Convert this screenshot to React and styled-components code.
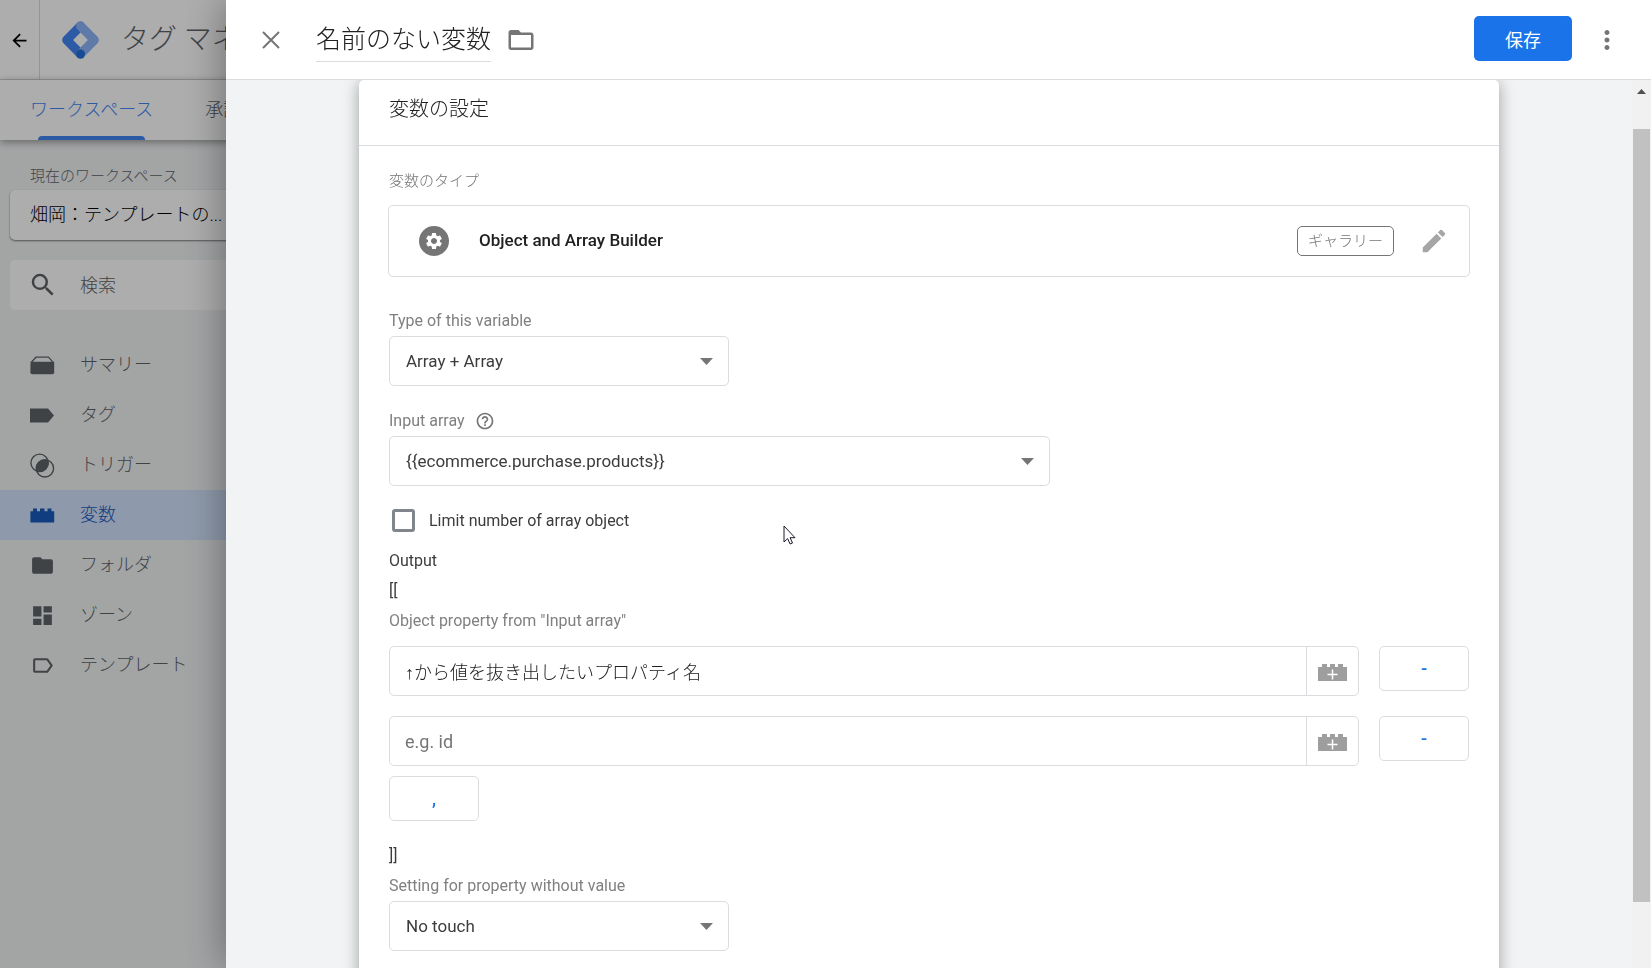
import React, { useState } from "react";
import styled, { createGlobalStyle } from "styled-components";
import {
  MdArrowBack,
  MdDashboard,
  MdEdit,
  MdFolder,
  MdFolderOpen,
  MdHelpOutline,
  MdLabelOutline,
  MdMoreVert,
  MdSearch,
  MdSettings,
} from "react-icons/md";

const GlobalStyle = createGlobalStyle`
  * {
    box-sizing: border-box;
  }

  html, body, #root {
    height: 100%;
  }

  body {
    margin: 0;
    overflow: hidden;
    background: #f1f3f4;
    color: #212121;
    font-family: Roboto, "Liberation Sans", "Noto Sans CJK JP", sans-serif;
    font-size: 16px;
  }

  button, input, select {
    font-family: inherit;
    margin: 0;
  }

  svg {
    display: block;
    flex-shrink: 0;
  }
`;

/* ---------- page behind the sheet ---------- */

const Page = styled.div`
  height: 100vh;
  display: flex;
  flex-direction: column;
  font-weight: 300;
`;

const AppHeader = styled.header`
  display: flex;
  height: 80px;
  background: #fff;
  border-bottom: 1px solid #dadce0;
`;

const BackButton = styled.button`
  display: flex;
  align-items: center;
  justify-content: center;
  width: 40px;
  padding: 2px 0 0;
  border: none;
  border-right: 1px solid #dadce0;
  background: none;
  color: #000;
`;

const Brand = styled.div`
  display: flex;
  align-items: center;
  gap: 22px;
  padding-left: 22px;
  color: #5f6368;
  font-size: 28px;
  line-height: 40px;
  white-space: nowrap;
`;

const Tabs = styled.nav`
  display: flex;
  gap: 52px;
  height: 60px;
  padding-left: 30px;
  background: #fff;
  box-shadow: 0 2px 8px rgba(0, 0, 0, 0.4);
  z-index: 1;
`;

const Tab = styled.a`
  display: flex;
  flex-direction: column;
  align-items: center;
  justify-content: space-between;
  padding-top: 17px;
  color: ${({ $active }) => ($active ? "#4285f4" : "#5f6368")};
  font-size: 18px;
  line-height: 26px;
  text-decoration: none;
  white-space: nowrap;

  &::after {
    content: "";
    width: calc(100% - 16px);
    height: 4px;
    border-radius: 4px 4px 0 0;
    background: ${({ $active }) => ($active ? "#4285f4" : "transparent")};
  }
`;

const Sidebar = styled.aside`
  width: 320px;
  padding-top: 25px;
`;

const WorkspaceLabel = styled.div`
  padding-left: 30px;
  color: #5f6368;
  font-size: 15px;
  line-height: 22px;
`;

const WorkspaceButton = styled.button`
  display: block;
  width: 290px;
  height: 50px;
  margin: 3px 0 20px 10px;
  padding: 0 20px 4px;
  border: none;
  border-radius: 5px;
  background: #fff;
  box-shadow: 0 1px 2px rgba(0, 0, 0, 0.5);
  color: #000;
  font-size: 18px;
  font-weight: 300;
  text-align: left;
`;

const SearchBox = styled.label`
  display: flex;
  align-items: center;
  gap: 22px;
  width: 290px;
  height: 50px;
  margin: 0 0 30px 10px;
  padding-left: 18px;
  border-radius: 5px;
  background: #fff;
  color: #5f6368;
`;

const SearchInput = styled.input`
  flex: 1;
  min-width: 0;
  padding: 0;
  border: none;
  outline: none;
  background: none;
  font-size: 18px;
  font-weight: 300;

  &::placeholder {
    color: #5f6368;
  }
`;

const NavItem = styled.a`
  display: flex;
  align-items: center;
  gap: 25px;
  height: 50px;
  padding-left: 30px;
  background: ${({ $active }) => ($active ? "#d2e3fc" : "transparent")};
  color: ${({ $active }) => ($active ? "#185abc" : "#5f6368")};
  font-size: 18px;
  line-height: 26px;
  text-decoration: none;
`;

const Scrim = styled.div`
  position: fixed;
  inset: 0;
  z-index: 2;
  background: rgba(0, 0, 0, 0.32);
`;

/* ---------- sheet ---------- */

const Sheet = styled.section`
  position: fixed;
  inset: 0 0 0 226px;
  z-index: 3;
  display: flex;
  flex-direction: column;
  background: #f1f3f4;
  box-shadow: 0 0 40px rgba(0, 0, 0, 0.4);
`;

const SheetHeader = styled.header`
  display: flex;
  align-items: center;
  flex-shrink: 0;
  height: 80px;
  padding: 0 29px 0 30px;
  background: #fff;
  border-bottom: 1px solid #dadce0;
  color: #757575;
  z-index: 1;
`;

const IconButton = styled.button`
  display: flex;
  align-items: center;
  justify-content: center;
  padding: 0;
  border: none;
  background: none;
  color: inherit;
  cursor: pointer;
`;

const NameInput = styled.input`
  width: 175px;
  height: 44px;
  margin: 0 15px 0 30px;
  padding: 0 0 4px;
  border: none;
  border-bottom: 1px solid #dadce0;
  outline: none;
  color: #212121;
  font-size: 25px;
  font-weight: 300;
`;

const SaveButton = styled.button`
  width: 98px;
  height: 45px;
  margin: 0 20px 2px auto;
  border: none;
  border-radius: 5px;
  background: #1a73e8;
  color: #fff;
  font-size: 18px;
  cursor: pointer;
`;

const SheetBody = styled.div`
  display: flex;
  flex: 1;
  min-height: 0;
`;

const ScrollArea = styled.div`
  flex: 1;
  min-width: 0;
  padding: 0 133px;
  overflow: hidden;
`;

const Card = styled.div`
  min-height: 100%;
  padding-bottom: 40px;
  border-radius: 5px;
  background: #fff;
  box-shadow: 0 2px 16px rgba(0, 0, 0, 0.35);
`;

const CardTitle = styled.h2`
  margin: 0;
  padding: 15px 30px 22px;
  border-bottom: 1px solid #dadce0;
  font-size: 20px;
  font-weight: 300;
  line-height: 28px;
`;

const CardBody = styled.div`
  display: flex;
  flex-direction: column;
  align-items: flex-start;
  padding: 25px 30px;
`;

const Caption = styled.div`
  color: #757575;
  font-size: 15px;
  font-weight: 300;
  line-height: 20px;
`;

const TypeBox = styled.div`
  display: flex;
  align-items: center;
  align-self: stretch;
  height: 72px;
  margin: 14px -1px 34px;
  padding: 0 20px 0 30px;
  border: 1px solid #dadce0;
  border-radius: 5px;
  color: #a6a6a6;
`;

const TypeIcon = styled.span`
  display: flex;
  align-items: center;
  justify-content: center;
  width: 30px;
  height: 30px;
  margin-right: 30px;
  border-radius: 50%;
  background: #757575;
  color: #fff;
`;

const TypeName = styled.span`
  flex: 1;
  padding-bottom: 2px;
  color: #212121;
  font-size: 17px;
  font-weight: 500;
  line-height: 24px;
`;

const Badge = styled.span`
  height: 30px;
  margin-right: 25px;
  padding: 0 10px;
  border: 1px solid #757575;
  border-radius: 5px;
  color: #757575;
  font-size: 15px;
  font-weight: 300;
  line-height: 28px;
`;

const Label = styled.label`
  display: flex;
  align-items: center;
  gap: 10px;
  height: 20px;
  margin-bottom: 5px;
  color: #808080;
  font-size: 16px;
  line-height: 20px;
`;

const GroupLabel = styled(Label)`
  margin: 5px 0 15px;
`;

const SelectWrap = styled.div`
  position: relative;
  width: ${({ $wide }) => ($wide ? "661px" : "340px")};
  max-width: 100%;
  margin-bottom: 25px;

  svg {
    position: absolute;
    top: 22px;
    right: 16px;
    pointer-events: none;
  }
`;

const Select = styled.select`
  appearance: none;
  display: block;
  width: 100%;
  height: 50px;
  padding: 0 40px 0 16px;
  border: 1px solid #dadce0;
  border-radius: 5px;
  background: #fff;
  color: #3c3c3c;
  font-size: 17px;
`;

const CheckRow = styled.label`
  display: flex;
  align-items: center;
  gap: 14px;
  height: 24px;
  margin: -3px 0 14px;
  padding-left: 3px;
  color: #3c3c3c;
  font-size: 16px;
`;

const Checkbox = styled.input`
  appearance: none;
  width: 23px;
  height: 23px;
  border: 3px solid #80868b;
  border-radius: 3px;

  &:checked {
    background: #1a73e8;
  }
`;

const Line = styled.div`
  height: 30px;
  color: #3c3c3c;
  font-size: 16px;
  line-height: 30px;
`;

const PropertyRow = styled.div`
  display: flex;
  align-self: stretch;
  gap: 20px;
  margin-bottom: ${({ $last }) => ($last ? "10px" : "20px")};
`;

const PropertyField = styled.div`
  display: flex;
  flex: 1;
  min-width: 0;
  height: 50px;
  border: 1px solid #dadce0;
  border-radius: 5px;
`;

const PropertyInput = styled.input`
  flex: 1;
  min-width: 0;
  padding: 0 15px;
  border: none;
  outline: none;
  background: none;
  color: #212121;
  font-size: 18px;
  font-weight: 300;

  &::placeholder {
    color: #757575;
    font-weight: 400;
  }
`;

const BrickButton = styled(IconButton)`
  width: 52px;
  padding-top: 3px;
  border-left: 1px solid #dadce0;
  color: #9e9e9e;
`;

const SmallButton = styled.button`
  width: 90px;
  height: 45px;
  border: 1px solid #dadce0;
  border-radius: 5px;
  background: #fff;
  color: #1a73e8;
  font-size: 18px;
  font-weight: 500;
  cursor: pointer;
`;

const ClosingLine = styled(Line)`
  margin: 20px 0 5px;
`;

const Scrollbar = styled.div`
  display: flex;
  flex-direction: column;
  width: 19px;
  padding: 9px 1px 0;
  background: #f1f1f1;

  svg {
    align-self: center;
    margin-bottom: 8px;
  }
`;

const Track = styled.div`
  display: grid;
  grid-template-rows: 27fr 773fr 66fr;
  flex: 1;
`;

const Thumb = styled.div`
  grid-row: 2;
  background: #c1c1c1;
`;

// Mouse pointer lying over the form
const Pointer = styled.svg`
  position: fixed;
  left: 783px;
  top: 525px;
  z-index: 4;
  pointer-events: none;
`;

/* ---------- drawings ---------- */

const Logo = () => (
  <svg width="37" height="40" viewBox="0 0 37 40">
    <g fill="none" strokeWidth="9" strokeLinecap="round" strokeLinejoin="round">
      <path d="M18.5 6 4.7 20l13.800 14" stroke="#4285f4" />
      <path d="M18.5 6l13.800 14-13.800 14" stroke="#8ab4f8" />
    </g>
    <circle cx="18.5" cy="34" r="4.500" fill="#246fdb" />
  </svg>
);

const CloseIcon = () => (
  <svg width="30" height="30" viewBox="0 0 30 30" stroke="currentColor" strokeWidth="2">
    <path d="M7 7l16 16M23 7L7 23" />
  </svg>
);

const SummaryIcon = () => (
  <svg width="25" height="25" viewBox="0 0 25 25" fill="currentColor">
    <path d="M5.6 3.5h13.2L23.6 9H22l-3.8-4.3H6.4L2.6 9H.8z" />
    <path d="M.5 8.8h23.7v10.6a1.8 1.8 0 0 1-1.8 1.8H2.2a1.8 1.8 0 0 1-1.8-1.8z" />
  </svg>
);

const TagIcon = () => (
  <svg width="25" height="25" viewBox="0 0 25 25" fill="currentColor">
    <path d="M0 5.500h18L24 12.500l-6 7H0z" />
  </svg>
);

const TriggerIcon = () => (
  <svg width="25" height="25" viewBox="0 0 25 25">
    <g fill="none" stroke="currentColor" strokeWidth="1.4">
      <circle cx="9.6" cy="9.8" r="8.700" />
      <circle cx="14.9" cy="15.3" r="8.700" />
    </g>
    <path d="M18.200 7.300a8.700 8.700 0 0 1-11.900 10.500A8.700 8.700 0 0 1 18.200 7.300z" fill="currentColor" />
  </svg>
);

const BrickIcon = () => (
  <svg width="25" height="25" viewBox="0 0 25 25" fill="currentColor">
    <path d="M.4 8.200H3V5.500h4v2.700h3V5.500h4.500v2.700h3V5.500h4v2.700h2.700V19.500H.4z" />
  </svg>
);

const BrickAddIcon = () => (
  <svg width="29" height="17" viewBox="0 0 29 17">
    <path d="M0 3h4V0h5v3h3V0h5v3h3V0h5v3h4v14H0z" fill="currentColor" />
    <path d="M14.500 5.500v10M9.500 10.500h10" stroke="#fff" strokeWidth="1.500" />
  </svg>
);

const ArrowDown = () => (
  <svg width="13" height="7" viewBox="0 0 13 7">
    <path d="M0 0h13L6.500 7z" fill="#757575" />
  </svg>
);

const NAV = [
  { label: "サマリー", icon: <SummaryIcon /> },
  { label: "タグ", icon: <TagIcon /> },
  { label: "トリガー", icon: <TriggerIcon /> },
  { label: "変数", icon: <BrickIcon />, active: true },
  { label: "フォルダ", icon: <MdFolder size={25} /> },
  { label: "ゾーン", icon: <MdDashboard size={25} /> },
  { label: "テンプレート", icon: <MdLabelOutline size={25} /> },
];

const SelectField = ({ id, label, value, wide, help }) => (
  <>
    <Label htmlFor={id}>
      {label}
      {help && <MdHelpOutline size={20} color="#757575" />}
    </Label>
    <SelectWrap $wide={wide}>
      <Select id={id} defaultValue={value}>
        <option value={value}>{value}</option>
      </Select>
      <ArrowDown />
    </SelectWrap>
  </>
);

const VariableForm = () => {
  const [rows, setRows] = useState(["↑から値を抜き出したいプロパティ名", ""]);

  const updateRow = (index, value) =>
    setRows(rows.map((row, i) => (i === index ? value : row)));

  return (
    <CardBody>
      <Caption>変数のタイプ</Caption>
      <TypeBox>
        <TypeIcon>
          <MdSettings size={20} />
        </TypeIcon>
        <TypeName>Object and Array Builder</TypeName>
        <Badge>ギャラリー</Badge>
        <IconButton type="button" aria-label="編集">
          <MdEdit size={30} />
        </IconButton>
      </TypeBox>

      <SelectField id="type" label="Type of this variable" value="Array + Array" />
      <SelectField id="input" label="Input array" value="{{ecommerce.purchase.products}}" wide help />

      <CheckRow>
        <Checkbox type="checkbox" />
        Limit number of array object
      </CheckRow>

      <Line>Output</Line>
      <Line>[[</Line>
      <GroupLabel htmlFor="property-0">Object property from "Input array"</GroupLabel>
      {rows.map((row, index) => (
        <PropertyRow key={index} $last={index === rows.length - 1}>
          <PropertyField>
            <PropertyInput
              id={`property-${index}`}
              aria-label="Object property"
              placeholder="e.g. id"
              value={row}
              onChange={(e) => updateRow(index, e.target.value)}
            />
            <BrickButton type="button" aria-label="変数を選択">
              <BrickAddIcon />
            </BrickButton>
          </PropertyField>
          <SmallButton type="button" onClick={() => setRows(rows.filter((_, i) => i !== index))}>
            -
          </SmallButton>
        </PropertyRow>
      ))}
      <SmallButton type="button" onClick={() => setRows([...rows, ""])}>
        ,
      </SmallButton>
      <ClosingLine>]]</ClosingLine>

      <SelectField id="empty" label="Setting for property without value" value="No touch" />
    </CardBody>
  );
};

const App = () => {
  const [name, setName] = useState("名前のない変数");

  return (
    <>
      <GlobalStyle />
      <Page>
        <AppHeader>
          <BackButton type="button" aria-label="戻る">
            <MdArrowBack size={21} />
          </BackButton>
          <Brand>
            <Logo />
            <span>タグ マネージャー</span>
          </Brand>
        </AppHeader>
        <Tabs>
          <Tab href="#workspace" $active>ワークスペース</Tab>
          <Tab href="#approval">承認</Tab>
        </Tabs>
        <Sidebar>
          <WorkspaceLabel>現在のワークスペース</WorkspaceLabel>
          <WorkspaceButton type="button">畑岡：テンプレートの...</WorkspaceButton>
          <SearchBox>
            <MdSearch size={30} />
            <SearchInput type="text" placeholder="検索" aria-label="検索" />
          </SearchBox>
          <nav>
            {NAV.map((item) => (
              <NavItem key={item.label} href="#nav" $active={item.active}>
                {item.icon}
                {item.label}
              </NavItem>
            ))}
          </nav>
        </Sidebar>
      </Page>

      <Scrim />

      <Sheet>
        <SheetHeader>
          <IconButton type="button" aria-label="閉じる">
            <CloseIcon />
          </IconButton>
          <NameInput aria-label="変数名" value={name} onChange={(e) => setName(e.target.value)} />
          <IconButton type="button" aria-label="フォルダ">
            <MdFolderOpen size={30} />
          </IconButton>
          <SaveButton type="button">保存</SaveButton>
          <IconButton type="button" aria-label="その他">
            <MdMoreVert size={30} />
          </IconButton>
        </SheetHeader>
        <SheetBody>
          <ScrollArea>
            <Card>
              <CardTitle>変数の設定</CardTitle>
              <VariableForm />
            </Card>
          </ScrollArea>
          <Scrollbar aria-hidden="true">
            <svg width="9" height="5" viewBox="0 0 9 5">
              <path d="M4.500 0 9 5H0z" fill="#505050" />
            </svg>
            <Track>
              <Thumb />
            </Track>
          </Scrollbar>
        </SheetBody>
      </Sheet>

      <Pointer width="13" height="20" viewBox="0 0 13 20">
        <path
          d="M1 1v16l3.600-3.400 2.500 5.400 2.400-1-2.400-5.300H12z"
          fill="#fff"
          stroke="#1a1a2a"
        />
      </Pointer>
    </>
  );
};

export default App;
